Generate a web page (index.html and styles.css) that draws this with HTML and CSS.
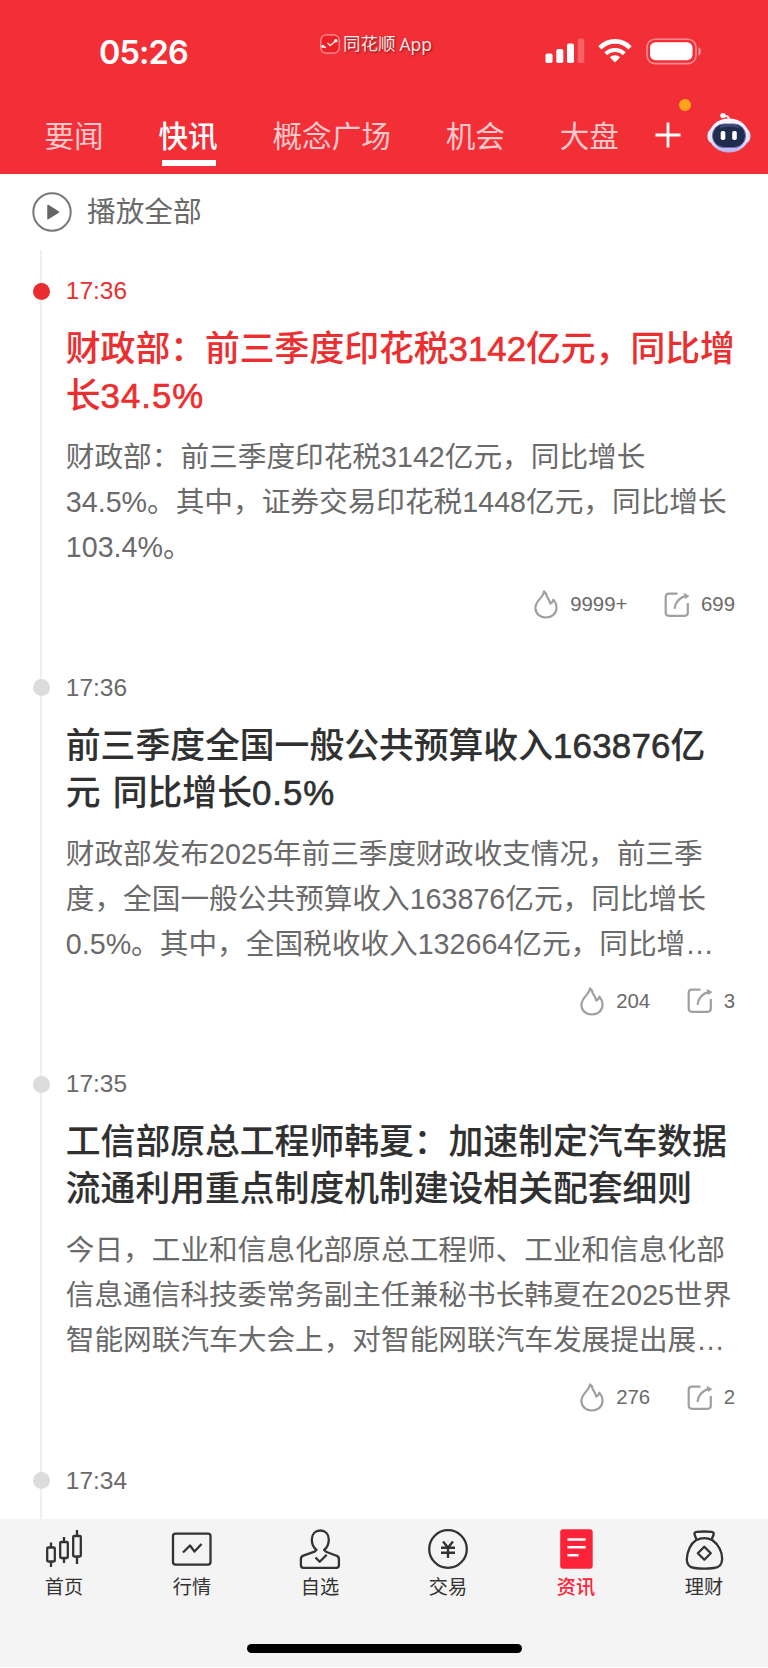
FILE: index.html
```html
<!DOCTYPE html>
<html lang="zh-CN">
<head>
<meta charset="utf-8">
<title>快讯</title>
<link rel="stylesheet" href="styles.css">
</head>
<body>
<svg class="defs" width="0" height="0" aria-hidden="true">
  <symbol id="flame" viewBox="0 0 24 29"><path d="M10 1.400C9.600 7.500 1.400 10.500 1.400 18c0 5.700 4.600 9.500 10.500 9.500S22.500 23.600 22.500 18c0-3.100-1-6.100-3.200-8.300-.3 1.800-1.300 3.100-3 3.800C15.300 9 13 7.500 12.400 5.200C12.300 4 11.500 2.500 10 1.400z"/></symbol>
  <symbol id="share" viewBox="0 0 26 26"><path d="M13.500 1.700H5C3 1.700 1.700 3 1.700 5v15.500c0 2 1.300 3.300 3.300 3.300h15.500c2 0 3.300-1.300 3.300-3.300V11M10.500 16.800C11 11 15 5.300 22 3.800"/><path class="tip" d="M19.500 .8l6 3.200-4.200 3z"/></symbol>
</svg>
<div class="screen">
  <header class="header">
    <div class="status">
      <span class="clock">05:26</span>
      <div class="brand">
        <svg width="20" height="20" viewBox="0 0 20 20"><rect x=".8" y=".8" width="18.400" height="18.400" rx="5.500" fill="#ec2027" stroke="#ff9a9c" stroke-width="1.200"/><path d="M2 12.500l4 1M7.500 9l2.800 2.500L15.500 7" fill="none" stroke="#ffe3df" stroke-width="1.500"/><circle cx="2.800" cy="12.300" r="1.500" fill="#fff"/><circle cx="15.800" cy="6.800" r="1.700" fill="#fff"/></svg>
        <span>同花顺</span><span class="app">App</span>
      </div>
      <div class="signals">
        <svg width="40" height="26" viewBox="0 0 40 26" fill="#fff"><rect x=".5" y="15.500" width="7" height="9.500" rx="1.800"/><rect x="11.300" y="11" width="7" height="14" rx="1.800"/><rect x="22" y="5.500" width="7" height="19.500" rx="1.800"/><rect x="32.800" y=".5" width="6.400" height="24.500" rx="1.800" opacity=".25"/></svg>
        <svg class="wifi" width="34" height="26" viewBox="0 0 34 26" fill="none" stroke="#fff" stroke-width="4.600"><path d="M1.900 9.800C10.400 1.200 23.600 1.200 32.100 9.800"/><path d="M7.700 15.800C13 10.700 21 10.700 26.300 15.800" stroke-width="4.200"/><path d="M11.800 19.300c3-2.700 7.400-2.700 10.400 0L17 24.500z" fill="#fff" stroke="none"/></svg>
        <svg width="57" height="27" viewBox="0 0 57 27"><rect x="1" y="1.200" width="49" height="24.400" rx="8" fill="none" stroke="#fff" stroke-opacity=".45" stroke-width="1.600"/><rect x="4" y="4.200" width="42.500" height="18" rx="5.500" fill="#fff"/><path d="M52.500 9c3.200 1.200 3.200 7.500 0 8.700z" fill="#fff" opacity=".5"/></svg>
      </div>
    </div>
    <nav class="tabs">
      <span class="tab">要闻</span>
      <span class="tab active">快讯</span>
      <span class="tab">概念广场</span>
      <span class="tab">机会</span>
      <span class="tab">大盘</span>
      <svg class="plus" width="26" height="26" viewBox="0 0 26 26"><path d="M13 .5v25M.5 13h25" stroke="#fff" stroke-width="2.800"/></svg>
      <i class="notice"></i>
      <svg class="robot" width="44" height="42" viewBox="0 0 44 42">
        <defs><linearGradient id="shell" x1="0" y1="0" x2="0" y2="1"><stop offset="0" stop-color="#f8f7ff"/><stop offset=".65" stop-color="#e4e4fa"/><stop offset="1" stop-color="#b7aee9"/></linearGradient></defs>
        <path d="M16 4.500c4-1 6-.2 6 3.500" fill="none" stroke="#f3eefc" stroke-width="2"/><circle cx="16" cy="3.600" r="2.700" fill="#fff"/>
        <ellipse cx="5" cy="24" rx="4.600" ry="7" fill="#e5e9fa"/><ellipse cx="39" cy="24" rx="4.600" ry="7" fill="#d1cff1"/>
        <ellipse cx="22" cy="23.500" rx="20" ry="17" fill="url(#shell)"/>
        <rect x="5.500" y="12" width="33" height="23.500" rx="11.500" fill="#202c4e" stroke="#7267ba" stroke-width="1"/>
        <path d="M13 15c6-2 13-2 19 0" fill="none" stroke="#3d4b70" stroke-width="2"/>
        <rect x="13.700" y="19" width="4.600" height="9" rx="1.800" fill="#fff"/><rect x="25.200" y="19" width="4.600" height="9" rx="1.800" fill="#fff"/>
      </svg>
    </nav>
  </header>

  <main class="feed">
    <div class="playall">
      <svg width="40" height="40" viewBox="0 0 40 40"><circle cx="20" cy="20" r="18.700" fill="none" stroke="#777" stroke-width="2"/><path d="M16 13.500v13.200l10.500-6.600z" fill="#666" stroke="#666" stroke-width="1.500" stroke-linejoin="round"/></svg>
      <span>播放全部</span>
    </div>
    <div class="timeline">
      <article class="item hot">
        <time>17:36</time>
        <h2>财政部：前三季度印花税<b>3142</b>亿元，同比增<br>长<b class="wide">34.5%</b></h2>
        <p>财政部：前三季度印花税3142亿元，同比增长<br>34.5%。其中，证券交易印花税1448亿元，同比增长<br>103.4%。</p>
        <div class="stats"><svg class="flame"><use href="#flame"/></svg><span>9999+</span><svg class="share"><use href="#share"/></svg><span>699</span></div>
      </article>
      <article class="item">
        <time>17:36</time>
        <h2>前三季度全国一般公共预算收入<b class="count">163876</b>亿<br><span class="spaced">元 同比增长</span><b class="wide">0.5%</b></h2>
        <p>财政部发布2025年前三季度财政收支情况，前三季<br>度，全国一般公共预算收入163876亿元，同比增长<br>0.5%。其中，全国税收收入132664亿元，同比增…</p>
        <div class="stats"><svg class="flame"><use href="#flame"/></svg><span>204</span><svg class="share"><use href="#share"/></svg><span>3</span></div>
      </article>
      <article class="item">
        <time>17:35</time>
        <h2>工信部原总工程师韩夏：加速制定汽车数据<br>流通利用重点制度机制建设相关配套细则</h2>
        <p>今日，工业和信息化部原总工程师、工业和信息化部<br>信息通信科技委常务副主任兼秘书长韩夏在2025世界<br>智能网联汽车大会上，对智能网联汽车发展提出展…</p>
        <div class="stats"><svg class="flame"><use href="#flame"/></svg><span>276</span><svg class="share"><use href="#share"/></svg><span>2</span></div>
      </article>
      <article class="item">
        <time>17:34</time>
      </article>
    </div>
  </main>

  <footer class="dock">
    <nav class="menu">
      <a class="entry"><svg width="42" height="42" viewBox="0 0 42 42"><path d="M8 14.500v5M8 33.500v5.500M21 9v5M21 30v5M34 2v6M34 28.500v7.500"/><rect x="4.200" y="19.500" width="7.600" height="14" rx="1"/><rect x="17.200" y="14" width="7.600" height="16" rx="1"/><rect x="30.200" y="8" width="7.600" height="20.500" rx="1"/></svg><span>首页</span></a>
      <a class="entry"><svg width="42" height="42" viewBox="0 0 42 42"><rect x="2" y="5.600" width="37.500" height="31" rx="2.500"/><path d="M12 24.500l7-7 4.500 6 7-7.500"/></svg><span>行情</span></a>
      <a class="entry"><svg width="42" height="42" viewBox="0 0 42 42"><path d="M17.500 22c-3.200-2.500-4.700-6-4.700-10.500 0-5.500 3.500-9 8.500-9s8.500 3.500 8.500 9c0 4.500-1.500 8-4.700 10.500l1.900 1.700 10.500 4c1.700.6 2.400 1.800 2.400 3.500V37c0 2-.8 2.800-2.500 2.800h-33c-1.700 0-2.500-.8-2.500-2.800v-5.800c0-1.700.7-2.900 2.400-3.500l11.300-4z"/><path d="M16.500 29.500l4.200 4.300 7-7"/></svg><span>自选</span></a>
      <a class="entry"><svg width="42" height="42" viewBox="0 0 42 42"><circle cx="21" cy="21" r="18.800"/><path stroke-width="2.400" d="M16 13.500l5 6 5-6M14 19.700h14M14 24.700h14M21 19.500V30"/></svg><span>交易</span></a>
      <a class="entry selected"><svg width="42" height="42" viewBox="0 0 42 42"><rect x="5.200" y="1.200" width="32.500" height="39.500" rx="3" fill="#fc2338" stroke="none"/><path d="M12.500 11.500h18.200M12.500 19.200h18.200M12.500 27.200h11" stroke="#fff" stroke-width="2.600"/></svg><span>资讯</span></a>
      <a class="entry"><svg width="42" height="42" viewBox="0 0 42 42"><path d="M13.500 11.500l-1.900-4.700c-.5-1.700.2-2.800 2-2.900 5-.5 10-.5 15 0 1.700.2 2.500 1.200 2 2.900l-1.900 4.500"/><path d="M13 12.300c5-2.700 11.500-2.700 16.500 0C35.500 16.500 39.500 24 39.100 31.500c-.2 5.500-2.500 8-8.300 8.500-6.300.7-13 .7-19.300 0-5.500-.6-7.700-3-7.700-8.500.2-8.500 4-16 9.200-19.200z"/><path d="M21.300 18.800l6.500 6.500-6.500 6.500-6.500-6.500z"/></svg><span>理财</span></a>
    </nav>
    <div class="home"></div>
  </footer>
</div>
</body>
</html>
```

FILE: styles.css
```css
* { box-sizing: border-box; }
body {
  margin: 0;
  background: #fff;
  font-family: "Liberation Sans", "Noto Sans CJK SC", sans-serif;
  color: #6a6a6a;
}
.defs { display: block; height: 0; }
.screen {
  width: 768px;
  height: 1668px;
  display: flex;
  flex-direction: column;
  overflow: hidden;
}
svg { display: block; flex: none; }

.header {
  flex: none;
  height: 174px;
  background: #f22f37;
  color: #fff;
}
.status {
  height: 98px;
  display: flex;
  padding-left: 99px;
}
.clock {
  width: 221px;
  padding-top: 32px;
  font: 600 32.500px/41px Inter, sans-serif;
  letter-spacing: -.9px;
}
.brand {
  width: 225px;
  height: 40px;
  margin-top: 24px;
  display: flex;
  align-items: center;
  font-size: 17.500px;
  color: #ffe9e8;
  text-shadow: 1px 1px 2px rgba(90, 0, 0, .7);
}
.brand span { margin-left: 3px; line-height: 40px; }
.brand .app { margin-left: 4px; font-family: "Open Sans", sans-serif; font-size: 17.500px; }
.signals {
  display: flex;
  align-items: flex-start;
  padding-top: 38px;
}
.wifi { margin: 0 14px 0 13px; }
.tabs {
  position: relative;
  height: 76px;
  display: flex;
  gap: 54.800px;
  padding-left: 44.500px;
  font-size: 29.600px;
  line-height: 77px;
  color: #ffc9cb;
  white-space: nowrap;
}
.tab { position: relative; }
.tab.active { color: #fff; font-weight: 500; }
.tab.active::after {
  content: "";
  position: absolute;
  left: 3.200px;
  top: 62px;
  width: 54px;
  height: 6px;
  background: #fff;
}
.plus { margin: 24px 0 0 -18.800px; }
.notice {
  position: absolute;
  left: 678.500px;
  top: .5px;
  width: 12.500px;
  height: 12.500px;
  border-radius: 50%;
  background: #ffa41b;
}
.robot { margin: 14px 0 0 -29px; }

.feed { height: 1345px; overflow: hidden; background: #fff; }
.playall {
  height: 76px;
  display: flex;
  align-items: center;
  gap: 15px;
  padding-left: 32px;
  font-size: 28.700px;
  line-height: 40px;
}
.playall span { margin-top: -1px; }
.timeline {
  margin-left: 40px;
  border-left: 2px solid #efefef;
  padding: 26.300px 0 0 23.800px;
}
.item { position: relative; height: 396.500px; white-space: nowrap; }
.item::before {
  content: "";
  position: absolute;
  left: -33.300px;
  top: 6.700px;
  width: 17px;
  height: 17px;
  border-radius: 50%;
  background: #dcdcdc;
}
.item.hot::before { background: #e92c2f; }
.item time { display: block; font-size: 24.500px; line-height: 30px; }
.item h2 {
  margin: 19px 0 0;
  font-size: 34.800px;
  line-height: 47px;
  font-weight: 500;
  color: #303030;
  -webkit-text-stroke: .12px currentColor;
}
.item h2 b { font-weight: 400; -webkit-text-stroke: .65px currentColor; }
.item h2 .wide { letter-spacing: 1px; }
.item h2 .count { letter-spacing: .25px; }
.spaced { word-spacing: 2.500px; }
.item.hot time, .item.hot h2 { color: #eb2f30; }
.item p {
  margin: 16px 0 0;
  font-size: 28.670px;
  line-height: 44.900px;
}
.stats {
  height: 30px;
  margin: 19.500px 33px 0 0;
  display: flex;
  align-items: center;
  justify-content: flex-end;
  font-size: 20.400px;
}
.flame, .share { fill: none; stroke: #a0a0a0; stroke-width: 2.200; stroke-linejoin: round; }
.flame { width: 24px; height: 29px; margin-right: 12.500px; }
.share { width: 26px; height: 26px; margin: 0 10.500px 0 37px; }
.tip { fill: #a0a0a0; stroke: none; }

.dock { height: 148px; background: #f4f4f4; }
.menu { height: 122px; display: flex; }
.entry {
  width: 128.200px;
  display: flex;
  flex-direction: column;
  align-items: center;
  padding-top: 8.500px;
  font-size: 19.200px;
  line-height: 35px;
  color: #333;
}
.entry svg { fill: none; stroke: #333; stroke-width: 2.300; stroke-linejoin: round; }
.entry.selected { color: #fc2338; font-weight: 500; }
.home {
  width: 275px;
  height: 9px;
  margin: 2.500px auto 0;
  border-radius: 5px;
  background: #000;
}
```
